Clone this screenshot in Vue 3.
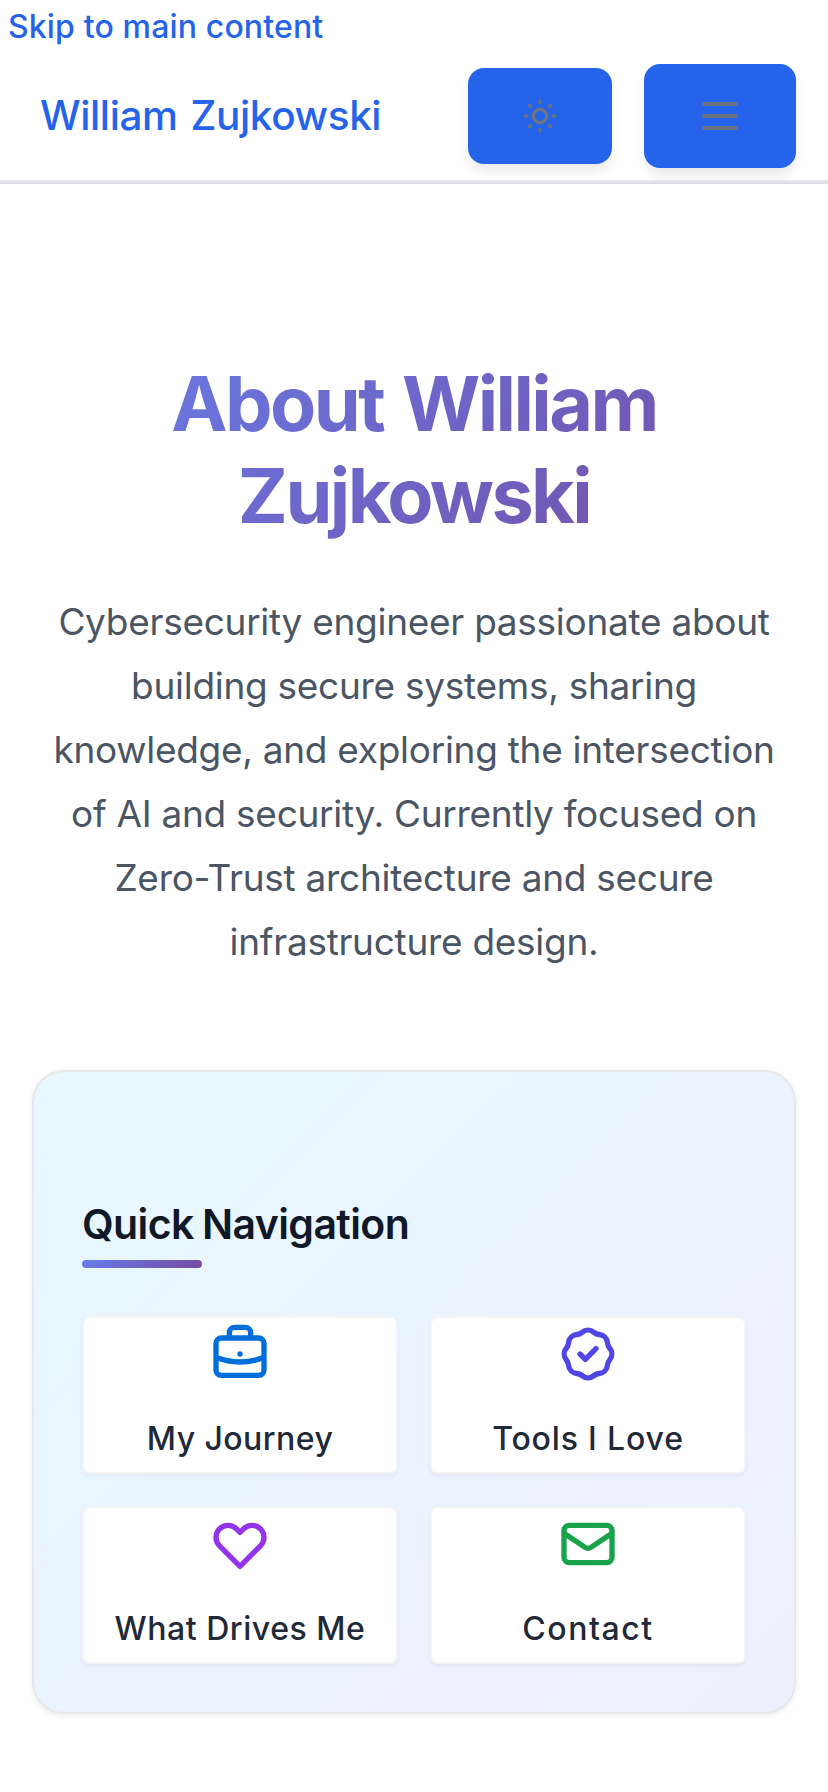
<script setup>
const links = [
  {
    label: 'My Journey',
    tone: 'blue',
    path: 'M21 13.255A23.931 23.931 0 0112 15c-3.183 0-6.22-.62-9-1.745M16 6V4a2 2 0 00-2-2h-4a2 2 0 00-2 2v2m4 6h.01M5 20h14a2 2 0 002-2V8a2 2 0 00-2-2H5a2 2 0 00-2 2v10a2 2 0 002 2z',
  },
  {
    label: 'Tools I Love',
    tone: 'indigo',
    path: 'M9 12l2 2 4-4M7.835 4.697a3.42 3.42 0 001.946-.806 3.42 3.42 0 014.438 0 3.42 3.42 0 001.946.806 3.42 3.42 0 013.138 3.138 3.42 3.42 0 00.806 1.946 3.42 3.42 0 010 4.438 3.42 3.42 0 00-.806 1.946 3.42 3.42 0 01-3.138 3.138 3.42 3.42 0 00-1.946.806 3.42 3.42 0 01-4.438 0 3.42 3.42 0 00-1.946-.806 3.42 3.42 0 01-3.138-3.138 3.42 3.42 0 00-.806-1.946 3.42 3.42 0 010-4.438 3.42 3.42 0 00.806-1.946 3.42 3.42 0 013.138-3.138z',
  },
  {
    label: 'What Drives Me',
    tone: 'purple',
    path: 'M4.318 6.318a4.5 4.5 0 000 6.364L12 20.364l7.682-7.682a4.5 4.5 0 00-6.364-6.364L12 7.636l-1.318-1.318a4.5 4.5 0 00-6.364 0z',
  },
  {
    label: 'Contact',
    tone: 'green',
    path: 'M3 8l7.89 5.26a2 2 0 002.22 0L21 8M5 19h14a2 2 0 002-2V7a2 2 0 00-2-2H5a2 2 0 00-2 2v10a2 2 0 002 2z',
  },
]
</script>

<template>
  <div class="page">
    <a class="skip">Skip to main content</a>
    <header class="header">
      <a class="brand">William Zujkowski</a>
      <div class="actions">
        <button class="btn theme" aria-label="Toggle theme">
          <svg viewBox="0 0 24 24">
            <path d="M12 3v1m0 16v1m9-9h-1M4 12H3m15.364 6.364l-.707-.707M6.343 6.343l-.707-.707m12.728 0l-.707.707M6.343 17.657l-.707.707M16 12a4 4 0 11-8 0 4 4 0 018 0z" />
          </svg>
        </button>
        <button class="btn menu" aria-label="Open menu">
          <svg viewBox="0 0 24 24"><path d="M4 6h16M4 12h16M4 18h16" /></svg>
        </button>
      </div>
    </header>
    <main class="main">
      <h1 class="title">About William Zujkowski</h1>
      <p class="lead">
        Cybersecurity engineer passionate about building secure systems, sharing knowledge, and
        exploring the intersection of AI and security. Currently focused on Zero-Trust architecture
        and secure infrastructure design.
      </p>
      <section class="card">
        <h2 class="heading">Quick Navigation</h2>
        <div class="rule"></div>
        <nav class="grid">
          <a v-for="link in links" :key="link.label" class="tile" :class="link.tone">
            <svg viewBox="0 0 24 24"><path :d="link.path" /></svg>
            <span class="label">{{ link.label }}</span>
          </a>
        </nav>
      </section>
    </main>
  </div>
</template>

<style>
body {
  margin: 0;
  background: #fff;
}
</style>

<style scoped>
.page {
  width: 828px;
  height: 1792px;
  overflow: hidden;
  background: #fff;
  font-family: Inter, 'Liberation Sans', sans-serif;
  box-sizing: border-box;
}
.skip {
  display: block;
  height: 52px;
  padding-left: 8px;
  line-height: 54px;
  font-size: 32px;
  font-weight: 500;
  letter-spacing: 0.15px;
  color: #2563eb;
  box-sizing: border-box;
}
.header {
  display: flex;
  align-items: center;
  justify-content: space-between;
  height: 132px;
  padding: 0 32px 2px 40px;
  box-sizing: border-box;
  border-bottom: 2px solid #dddfe4;
  box-shadow: inset 0 -2px 0 #e5e7eb;
}
.brand {
  font-size: 40.5px;
  font-weight: 500;
  line-height: 56px;
  letter-spacing: -0.4px;
  word-spacing: 2.5px;
  color: #2563eb;
}
.actions {
  display: flex;
  align-items: center;
  gap: 32px;
}
.btn {
  display: flex;
  align-items: center;
  justify-content: center;
  padding: 0;
  border: 0;
  border-radius: 16px;
  background: #2563eb;
  box-shadow: 0 8px 12px -2px rgba(0, 0, 0, 0.1);
}
svg {
  display: block;
  fill: none;
  stroke: currentColor;
  stroke-width: 2;
  stroke-linecap: round;
  stroke-linejoin: round;
}
.btn svg {
  color: #6b7280;
}
.theme {
  width: 144px;
  height: 96px;
}
.theme svg {
  width: 40px;
  height: 40px;
}
.menu {
  width: 152px;
  height: 104px;
}
.menu svg {
  width: 48px;
  height: 48px;
}
.main {
  padding: 174px 32px 0;
}
.title {
  margin: 0;
  font-size: 75.5px;
  font-weight: 700;
  line-height: 92px;
  letter-spacing: -2.6px;
  word-spacing: 3.5px;
  text-align: center;
  color: transparent;
  background: linear-gradient(135deg, #667eea 0%, #764ba2 100%);
  background-clip: text;
  -webkit-background-clip: text;
}
.lead {
  margin: 48px 0 0;
  font-size: 37px;
  line-height: 64px;
  letter-spacing: -0.28px;
  text-align: center;
  color: #4b5563;
}
.card {
  margin-top: 96px;
  height: 644px;
  padding: 0 48px 48px;
  display: flex;
  flex-direction: column;
  justify-content: flex-end;
  box-sizing: border-box;
  border: 2px solid #e5e7eb;
  border-radius: 32px;
  background: linear-gradient(135deg, #e7f8ff 0%, #ebf3ff 55%, #edf1fe 100%);
  box-shadow: 0 2px 6px rgba(0, 0, 0, 0.08);
}
.heading {
  margin: 0;
  padding-bottom: 2px;
  font-size: 41px;
  font-weight: 600;
  line-height: 56px;
  letter-spacing: -0.6px;
  word-spacing: -1.5px;
  color: #111827;
}
.rule {
  width: 120px;
  height: 8px;
  margin: 6px 0 48px;
  border-radius: 4px;
  background: linear-gradient(135deg, #667eea 0%, #764ba2 100%);
}
.grid {
  display: grid;
  grid-template-columns: 1fr 1fr;
  gap: 32px;
}
.tile {
  display: flex;
  flex-direction: column;
  align-items: center;
  height: 158px;
  padding-top: 4px;
  box-sizing: border-box;
  border: 2px solid #f3f4f6;
  border-radius: 8px;
  background: #fff;
  box-shadow: 0 2px 4px rgba(0, 0, 0, 0.05);
}
.tile svg {
  width: 64px;
  height: 64px;
}
.label {
  margin-top: 27px;
  font-size: 32px;
  font-weight: 500;
  line-height: 52px;
  color: #1f2937;
  white-space: nowrap;
}
.blue {
  color: #006fdc;
  letter-spacing: 0.45px;
}
.indigo {
  color: #4f46e5;
  letter-spacing: 0.85px;
}
.purple {
  color: #9333ea;
  letter-spacing: 0.55px;
}
.green {
  color: #16a34a;
  letter-spacing: 1.55px;
}
</style>
